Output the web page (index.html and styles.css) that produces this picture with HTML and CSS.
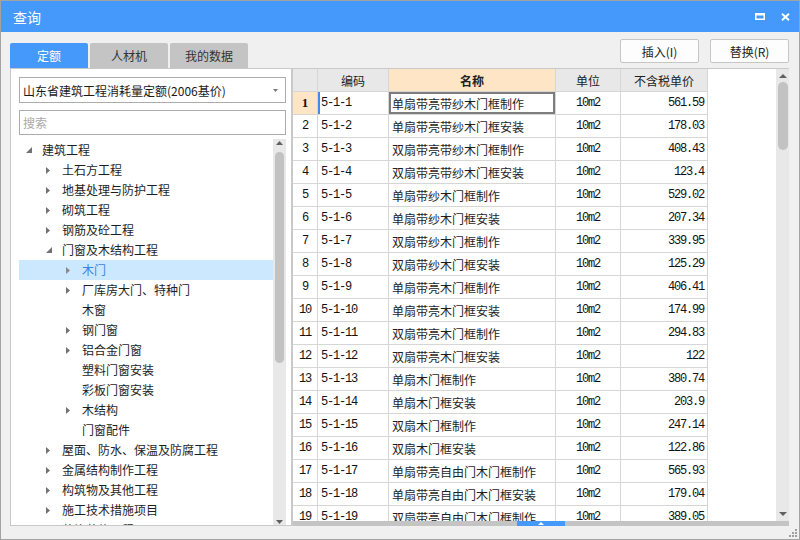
FILE: index.html
```html
<!DOCTYPE html>
<html lang="zh">
<head>
<meta charset="utf-8">
<title>查询</title>
<link rel="stylesheet" href="styles.css">
</head>
<body>
<div class="window">
  <div class="titlebar">
    <span class="title">查询</span>
    <div class="win-btns">
      <svg width="10" height="7" viewBox="0 0 10 7"><path d="M0 0H10V7H0Z M1.5 2.5V5.5H8.5V2.5Z" fill="#fff" fill-rule="evenodd"/></svg>
      <svg width="9" height="8" viewBox="0 0 9 8"><path d="M1 0.8L8 7.2M8 0.8L1 7.2" stroke="#fff" stroke-width="2"/></svg>
    </div>
  </div>
  <div class="toolbar">
    <div class="tabs">
      <div class="tab active">定额</div>
      <div class="tab">人材机</div>
      <div class="tab">我的数据</div>
    </div>
    <div class="actions">
      <div class="btn">插入(I)</div>
      <div class="btn">替换(R)</div>
    </div>
  </div>
  <div class="main">
    <div class="left">
      <div class="select"><span>山东省建筑工程消耗量定额(2006基价)</span><svg width="5" height="3" viewBox="0 0 5 3"><path d="M0 0H5L2.5 3Z" fill="#7a7a7a"/></svg></div>
      <div class="search">搜索</div>
      <div class="tree">
        <div class="tree-list">
          <div class="node"><span class="tw"><svg width="6" height="6" viewBox="0 0 6 6"><path d="M6 0V6H0Z" fill="#727272"/></svg></span>建筑工程</div>
          <div class="node l1"><span class="tw"><svg width="4" height="7" viewBox="0 0 4 7"><path d="M0 0L4 3.5L0 7Z" fill="#727272"/></svg></span>土石方工程</div>
          <div class="node l1"><span class="tw"><svg width="4" height="7" viewBox="0 0 4 7"><path d="M0 0L4 3.5L0 7Z" fill="#727272"/></svg></span>地基处理与防护工程</div>
          <div class="node l1"><span class="tw"><svg width="4" height="7" viewBox="0 0 4 7"><path d="M0 0L4 3.5L0 7Z" fill="#727272"/></svg></span>砌筑工程</div>
          <div class="node l1"><span class="tw"><svg width="4" height="7" viewBox="0 0 4 7"><path d="M0 0L4 3.5L0 7Z" fill="#727272"/></svg></span>钢筋及砼工程</div>
          <div class="node l1"><span class="tw"><svg width="6" height="6" viewBox="0 0 6 6"><path d="M6 0V6H0Z" fill="#727272"/></svg></span>门窗及木结构工程</div>
          <div class="node l2 selected"><span class="tw"><svg width="4" height="7" viewBox="0 0 4 7"><path d="M0 0L4 3.5L0 7Z" fill="#8a8a8a"/></svg></span>木门</div>
          <div class="node l2"><span class="tw"><svg width="4" height="7" viewBox="0 0 4 7"><path d="M0 0L4 3.5L0 7Z" fill="#727272"/></svg></span>厂库房大门、特种门</div>
          <div class="node l2"><span class="tw"></span>木窗</div>
          <div class="node l2"><span class="tw"><svg width="4" height="7" viewBox="0 0 4 7"><path d="M0 0L4 3.5L0 7Z" fill="#727272"/></svg></span>钢门窗</div>
          <div class="node l2"><span class="tw"><svg width="4" height="7" viewBox="0 0 4 7"><path d="M0 0L4 3.5L0 7Z" fill="#727272"/></svg></span>铝合金门窗</div>
          <div class="node l2"><span class="tw"></span>塑料门窗安装</div>
          <div class="node l2"><span class="tw"></span>彩板门窗安装</div>
          <div class="node l2"><span class="tw"><svg width="4" height="7" viewBox="0 0 4 7"><path d="M0 0L4 3.5L0 7Z" fill="#727272"/></svg></span>木结构</div>
          <div class="node l2"><span class="tw"></span>门窗配件</div>
          <div class="node l1"><span class="tw"><svg width="4" height="7" viewBox="0 0 4 7"><path d="M0 0L4 3.5L0 7Z" fill="#727272"/></svg></span>屋面、防水、保温及防腐工程</div>
          <div class="node l1"><span class="tw"><svg width="4" height="7" viewBox="0 0 4 7"><path d="M0 0L4 3.5L0 7Z" fill="#727272"/></svg></span>金属结构制作工程</div>
          <div class="node l1"><span class="tw"><svg width="4" height="7" viewBox="0 0 4 7"><path d="M0 0L4 3.5L0 7Z" fill="#727272"/></svg></span>构筑物及其他工程</div>
          <div class="node l1"><span class="tw"><svg width="4" height="7" viewBox="0 0 4 7"><path d="M0 0L4 3.5L0 7Z" fill="#727272"/></svg></span>施工技术措施项目</div>
          <div class="node l1"><span class="tw"><svg width="4" height="7" viewBox="0 0 4 7"><path d="M0 0L4 3.5L0 7Z" fill="#727272"/></svg></span>装饰装修工程</div>
        </div>
        <div class="vscroll tree-scroll">
          <svg class="arr-up" width="7" height="4" viewBox="0 0 7 4"><path d="M0 4H7L3.5 0Z" fill="#606060"/></svg>
          <div class="thumb"></div>
          <div class="spacer"></div>
          <svg class="arr-down" width="7" height="4" viewBox="0 0 7 4"><path d="M0 0H7L3.5 4Z" fill="#606060"/></svg>
        </div>
      </div>
    </div>
    <div class="right">
      <div class="grid-wrap">
        <div class="grid">
          <div class="row head"><div></div><div class="c">编码</div><div class="c hl">名称</div><div class="c">单位</div><div class="c">不含税单价</div></div>
          <div class="row cur"><div class="num">1</div><div class="code">5-1-1</div><div class="name sel">单扇带亮带纱木门框制作</div><div class="unit">10m2</div><div class="price">561.59</div></div>
          <div class="row"><div class="num">2</div><div class="code">5-1-2</div><div class="name">单扇带亮带纱木门框安装</div><div class="unit">10m2</div><div class="price">178.03</div></div>
          <div class="row"><div class="num">3</div><div class="code">5-1-3</div><div class="name">双扇带亮带纱木门框制作</div><div class="unit">10m2</div><div class="price">408.43</div></div>
          <div class="row"><div class="num">4</div><div class="code">5-1-4</div><div class="name">双扇带亮带纱木门框安装</div><div class="unit">10m2</div><div class="price">123.4</div></div>
          <div class="row"><div class="num">5</div><div class="code">5-1-5</div><div class="name">单扇带纱木门框制作</div><div class="unit">10m2</div><div class="price">529.02</div></div>
          <div class="row"><div class="num">6</div><div class="code">5-1-6</div><div class="name">单扇带纱木门框安装</div><div class="unit">10m2</div><div class="price">207.34</div></div>
          <div class="row"><div class="num">7</div><div class="code">5-1-7</div><div class="name">双扇带纱木门框制作</div><div class="unit">10m2</div><div class="price">339.95</div></div>
          <div class="row"><div class="num">8</div><div class="code">5-1-8</div><div class="name">双扇带纱木门框安装</div><div class="unit">10m2</div><div class="price">125.29</div></div>
          <div class="row"><div class="num">9</div><div class="code">5-1-9</div><div class="name">单扇带亮木门框制作</div><div class="unit">10m2</div><div class="price">406.41</div></div>
          <div class="row"><div class="num">10</div><div class="code">5-1-10</div><div class="name">单扇带亮木门框安装</div><div class="unit">10m2</div><div class="price">174.99</div></div>
          <div class="row"><div class="num">11</div><div class="code">5-1-11</div><div class="name">双扇带亮木门框制作</div><div class="unit">10m2</div><div class="price">294.83</div></div>
          <div class="row"><div class="num">12</div><div class="code">5-1-12</div><div class="name">双扇带亮木门框安装</div><div class="unit">10m2</div><div class="price">122</div></div>
          <div class="row"><div class="num">13</div><div class="code">5-1-13</div><div class="name">单扇木门框制作</div><div class="unit">10m2</div><div class="price">380.74</div></div>
          <div class="row"><div class="num">14</div><div class="code">5-1-14</div><div class="name">单扇木门框安装</div><div class="unit">10m2</div><div class="price">203.9</div></div>
          <div class="row"><div class="num">15</div><div class="code">5-1-15</div><div class="name">双扇木门框制作</div><div class="unit">10m2</div><div class="price">247.14</div></div>
          <div class="row"><div class="num">16</div><div class="code">5-1-16</div><div class="name">双扇木门框安装</div><div class="unit">10m2</div><div class="price">122.86</div></div>
          <div class="row"><div class="num">17</div><div class="code">5-1-17</div><div class="name">单扇带亮自由门木门框制作</div><div class="unit">10m2</div><div class="price">565.93</div></div>
          <div class="row"><div class="num">18</div><div class="code">5-1-18</div><div class="name">单扇带亮自由门木门框安装</div><div class="unit">10m2</div><div class="price">179.04</div></div>
          <div class="row"><div class="num">19</div><div class="code">5-1-19</div><div class="name">双扇带亮自由门木门框制作</div><div class="unit">10m2</div><div class="price">389.05</div></div>
        </div>
        <div class="vscroll grid-scroll">
          <svg class="arr-up" width="8" height="4" viewBox="0 0 8 4"><path d="M0 4H8L4 0Z" fill="#606060"/></svg>
          <div class="thumb"></div>
          <div class="spacer"></div>
          <svg class="arr-down" width="8" height="4" viewBox="0 0 8 4"><path d="M0 0H8L4 4Z" fill="#606060"/></svg>
        </div>
      </div>
      <div class="hscroll">
        <div class="hthumb"><svg width="6" height="3" viewBox="0 0 6 3"><path d="M0 3H6L3 0Z" fill="#fff"/></svg></div>
      </div>
    </div>
  </div>
  <div class="statusbar">
    <svg width="9" height="9" viewBox="0 0 9 9" fill="#a0a0a0"><rect x="7" y="1" width="2" height="2"/><rect x="4" y="4" width="2" height="2"/><rect x="7" y="4" width="2" height="2"/><rect x="1" y="7" width="2" height="2"/><rect x="4" y="7" width="2" height="2"/><rect x="7" y="7" width="2" height="2"/></svg>
  </div>
</div>
</body>
</html>
```

FILE: styles.css
```css
html, body {
  margin: 0;
  padding: 0;
}
body {
  font-family: "Noto Sans CJK SC", "Liberation Sans", sans-serif;
  font-size: 12px;
  color: #1e1e1e;
}
.window {
  width: 800px;
  height: 540px;
  box-sizing: border-box;
  border: 1px solid #a3a3a3;
  background: #f0f0f0;
  display: flex;
  flex-direction: column;
  overflow: hidden;
}
.titlebar {
  height: 31px;
  flex: none;
  background: #4499fb;
  color: #fff;
  font-size: 14px;
  display: flex;
  align-items: center;
  padding: 0 9px 0 12px;
}
.title {
  flex: 1;
}
.win-btns {
  display: flex;
  align-items: center;
  gap: 16px;
}
.toolbar {
  height: 36px;
  flex: none;
  display: flex;
  justify-content: space-between;
  padding: 0 10px 0 9px;
}
.tabs {
  display: flex;
  gap: 2px;
  align-self: flex-end;
}
.tab {
  width: 78px;
  height: 25px;
  border-radius: 2px 2px 0 0;
  background: #c4c4c4;
  color: #333;
  display: flex;
  align-items: center;
  justify-content: center;
}
.tab.active {
  background: #4499fb;
  color: #fff;
}
.actions {
  display: flex;
  gap: 11px;
  margin-top: 7px;
  align-self: flex-start;
}
.btn {
  width: 79px;
  height: 24px;
  box-sizing: border-box;
  border: 1px solid #c6c6c6;
  border-radius: 2px;
  background: #fdfdfd;
  display: flex;
  align-items: center;
  justify-content: center;
  color: #222;
}
.main {
  flex: 1;
  min-height: 0;
  display: flex;
  padding-left: 9px;
}
.left {
  width: 282px;
  flex: none;
  box-sizing: border-box;
  border: 1px solid #c9c9c9;
  background: #fff;
  padding: 8px 5px 0 8px;
  display: flex;
  flex-direction: column;
}
.select {
  height: 26px;
  flex: none;
  box-sizing: border-box;
  border: 1px solid #acacac;
  display: flex;
  align-items: center;
  justify-content: space-between;
  padding: 0 7px 0 3px;
  margin-bottom: 7px;
  color: #1a1a1a;
}
.search {
  height: 25px;
  flex: none;
  box-sizing: border-box;
  border: 1px solid #acacac;
  display: flex;
  align-items: center;
  padding-left: 3px;
  color: #a9a9a9;
  margin-bottom: 4px;
}
.tree {
  flex: 1;
  min-height: 0;
  display: flex;
}
.tree-list {
  flex: 1;
  padding-top: 1px;
  overflow: hidden;
}
.node {
  height: 20px;
  box-sizing: border-box;
  padding-bottom: 1px;
  display: flex;
  align-items: center;
  white-space: nowrap;
}
.node.l1 {
  padding-left: 20px;
}
.node.l2 {
  padding-left: 40px;
}
.node.selected {
  background: #cce8ff;
  color: #3b82e6;
}
.tw {
  width: 23px;
  flex: none;
  box-sizing: border-box;
  padding-left: 7px;
  padding-top: 1px;
  display: flex;
  align-items: center;
}
.vscroll {
  flex: none;
  background: #e8e8e8;
  display: flex;
  flex-direction: column;
  align-items: center;
}
.vscroll .spacer {
  flex: 1;
}
.tree-scroll {
  width: 13px;
}
.tree-scroll .arr-up {
  margin-top: 2px;
}
.tree-scroll .thumb {
  width: 9px;
  height: 211px;
  margin-top: 7px;
  border-radius: 5px;
  background: #c2c2c2;
}
.tree-scroll .arr-down {
  margin-bottom: 1px;
}
.right {
  width: 497px;
  flex: none;
  box-sizing: border-box;
  border-top: 1px solid #c9c9c9;
  border-left: 1px solid #c9c9c9;
  background: #fff;
  display: flex;
  flex-direction: column;
}
.grid-wrap {
  flex: 1;
  min-height: 0;
  display: flex;
}
.grid {
  flex: 1;
  overflow: hidden;
}
.row {
  display: grid;
  grid-template-columns: 25px 71px 167px 65px 87px;
  height: 23px;
}
.row > div {
  box-sizing: border-box;
  border-right: 1px solid #d6d6d6;
  border-bottom: 1px solid #d6d6d6;
  display: flex;
  align-items: center;
  white-space: nowrap;
  overflow: hidden;
}
.head > div {
  background: #e8e8e8;
  color: #222;
}
.head > div.hl {
  background: #fde5c6;
  font-weight: bold;
}
.c {
  justify-content: center;
}
.num,
.code,
.unit,
.price {
  font-family: "Liberation Mono", monospace;
  font-size: 12px;
  letter-spacing: -1.2px;
  color: #111;
}
.num {
  justify-content: center;
}
.code {
  padding-left: 3px;
}
.name {
  padding-left: 3px;
}
.unit {
  justify-content: center;
}
.price {
  justify-content: flex-end;
  padding-right: 3px;
}
.cur .num {
  background: #fde5c6;
  font-family: "Liberation Serif", serif;
  font-weight: bold;
  font-size: 13px;
  letter-spacing: 0;
}
.cur .code {
  box-shadow: inset 2px 0 0 #3b8ef0;
}
.cur .sel {
  box-shadow: inset 0 0 0 2px #7d7d7d;
}
.grid-scroll {
  width: 13px;
}
.grid-scroll .arr-up {
  margin-top: 5px;
}
.grid-scroll .thumb {
  width: 10px;
  height: 68px;
  margin-top: 4px;
  border-radius: 5px;
  background: #c2c2c2;
}
.grid-scroll .arr-down {
  margin-bottom: 5px;
}
.hscroll {
  height: 5px;
  flex: none;
  background: #c4c4c4;
  display: flex;
  padding-left: 224px;
}
.hthumb {
  width: 48px;
  background: #4499fb;
  display: flex;
  justify-content: center;
  align-items: flex-start;
  padding-top: 1px;
  box-sizing: border-box;
}
.hthumb svg {
  display: block;
}
.statusbar {
  height: 13px;
  flex: none;
  display: flex;
  justify-content: flex-end;
  align-items: flex-end;
  padding: 0 2px 2px 0;
  box-sizing: border-box;
}
svg {
  display: block;
}
```
